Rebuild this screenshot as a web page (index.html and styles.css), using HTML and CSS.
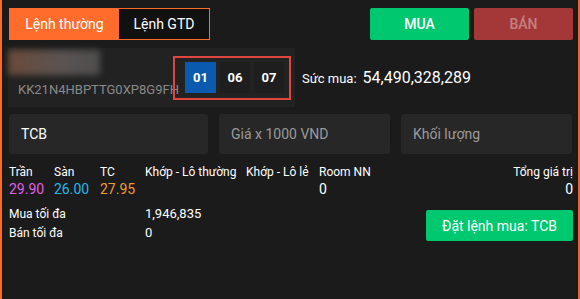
FILE: index.html
```html
<html>
<head>
<meta charset="UTF-8">
<title>Đặt lệnh</title>
<link rel="stylesheet" href="styles.css">
</head>
<body>
    <div class="panel">
        <div class="top-row">
            <div class="tabs">
                <span class="tab active">Lệnh thường</span>
                <span class="tab">Lệnh GTD</span>
            </div>
            <div class="sides">
                <button class="side buy">MUA</button>
                <button class="side sell">BÁN</button>
            </div>
        </div>

        <div class="account-row">
            <div class="account">
                <div class="account-info">
                    <div class="account-name"></div>
                    <div class="account-id">KK21N4HBPTTG0XP8G9FH</div>
                </div>
                <div class="sub-accounts">
                    <span class="sub selected">01</span>
                    <span class="sub">06</span>
                    <span class="sub">07</span>
                </div>
            </div>
            <div class="power">
                <span class="power-label">Sức mua:</span>
                <span class="power-value">54,490,328,289</span>
            </div>
        </div>

        <div class="inputs">
            <div class="field symbol">TCB</div>
            <div class="field placeholder">Giá x 1000 VND</div>
            <div class="field placeholder">Khối lượng</div>
        </div>

        <div class="stats">
            <div class="stat w-tran"><span>Trần</span><b class="ceil">29.90</b></div>
            <div class="stat w-san"><span>Sàn</span><b class="floor">26.00</b></div>
            <div class="stat w-tc"><span>TC</span><b class="ref">27.95</b></div>
            <div class="stat w-khop"><span>Khớp - Lô thường</span><b></b></div>
            <div class="stat w-le"><span>Khớp - Lô lẻ</span><b></b></div>
            <div class="stat w-room"><span>Room NN</span><b>0</b></div>
            <div class="stat total"><span>Tổng giá trị</span><b>0</b></div>
        </div>

        <div class="bottom">
            <div class="limits">
                <div class="limit"><span class="limit-label">Mua tối đa</span><span class="limit-value">1,946,835</span></div>
                <div class="limit"><span class="limit-label">Bán tối đa</span><span class="limit-value">0</span></div>
            </div>
            <button class="submit">Đặt lệnh mua: TCB</button>
        </div>
    </div>
</body>
</html>
```

FILE: styles.css
```css
body {
    margin: 0;
    background-color: #1b1b1b;
    color: #ffffff;
    font-family: Roboto, "Liberation Sans", Arial, sans-serif;
}
.panel {
    height: 299px;
    box-sizing: border-box;
    border-left: 2px solid #ff6a2b;
    border-right: 2px solid #e8663a;
    padding: 8px 5px 0 7px;
}
.top-row {
    display: flex;
    justify-content: space-between;
    height: 32px;
}
.tabs {
    display: flex;
    border: 1px solid #ff6c2b;
    box-sizing: border-box;
    width: 201px;
}
.tab {
    display: flex;
    align-items: center;
    justify-content: center;
    font-size: 14px;
    background-color: #111111;
    width: 91px;
}
.tab.active {
    background-color: #ff6c2b;
    width: 110px;
}
.sides {
    display: flex;
    gap: 5px;
}
.side {
    width: 99px;
    height: 32px;
    border: none;
    border-radius: 2px;
    font-family: inherit;
    font-size: 14px;
    font-weight: 500;
}
.buy {
    background-color: #00c86e;
    color: #ffffff;
}
.sell {
    background-color: #a43838;
    color: #c48080;
}
.account-row {
    display: flex;
    align-items: center;
    margin-top: 8px;
    margin-left: -1px;
}
.account {
    display: flex;
    align-items: center;
    width: 287px;
    height: 59px;
    box-sizing: border-box;
    background-color: #222222;
}
.account-info {
    display: flex;
    flex-direction: column;
    align-self: stretch;
    flex: 0 0 165px;
    min-width: 0;
    white-space: nowrap;
}
.account-name {
    width: 92px;
    height: 25px;
    margin-top: 2px;
    background: linear-gradient(90deg, #6b4a3a, #5a5452 60%, #4e4e4e);
    filter: blur(3px);
}
.account-id {
    color: #8a8a8a;
    font-size: 13px;
    margin: 7px 0 0 10px;
}
.sub-accounts {
    display: flex;
    gap: 4px;
    border: 2px solid #e0453f;
    padding: 4px 4px 5px 10px;
    width: 118px;
    height: 44px;
    box-sizing: border-box;
    flex: none;
}
.sub {
    width: 30px;
    height: 31px;
    display: flex;
    align-items: center;
    justify-content: center;
    background-color: #1e1e1e;
    font-size: 13px;
    font-weight: 700;
}
.sub.selected {
    background-color: #0a5aaf;
    width: 31px;
}
.power {
    display: flex;
    align-items: baseline;
    margin-left: 7px;
    gap: 6px;
}
.power-label {
    font-size: 13px;
}
.power-value {
    font-size: 16px;
}
.inputs {
    display: flex;
    gap: 11px;
    margin-top: 7px;
}
.field {
    height: 40px;
    display: flex;
    align-items: center;
    padding-left: 12px;
    box-sizing: border-box;
    background-color: #272727;
    border-radius: 3px;
    font-size: 14px;
    width: 171px;
}
.field.symbol {
    width: 199px;
}
.placeholder {
    color: #9a9a9a;
}
.stats {
    display: flex;
    margin-top: 11px;
    font-size: 12px;
}
.stat {
    display: flex;
    flex-direction: column;
}
.stat b {
    font-weight: 400;
    font-size: 14px;
    height: 17px;
    margin-top: 2px;
}
.w-tran { width: 45px; }
.w-san { width: 46px; }
.w-tc { width: 45px; }
.w-khop { width: 101px; }
.w-le { width: 73px; }
.w-room { width: 80px; }
.total {
    flex: 1;
    align-items: flex-end;
}
.ceil { color: #e25ee8; }
.floor { color: #22b9ea; }
.ref { color: #f39a2a; }
.bottom {
    display: flex;
    justify-content: space-between;
    align-items: flex-start;
    margin-top: 8px;
}
.limits {
    display: flex;
    flex-direction: column;
    gap: 4px;
}
.limit {
    display: flex;
    align-items: baseline;
}
.limit-label {
    width: 136px;
    font-size: 12px;
}
.limit-value {
    font-size: 13px;
}
.submit {
    margin-top: 4px;
    width: 147px;
    height: 31px;
    border: none;
    border-radius: 2px;
    background-color: #00c86e;
    color: #ffffff;
    font-family: inherit;
    font-size: 14px;
}
```
